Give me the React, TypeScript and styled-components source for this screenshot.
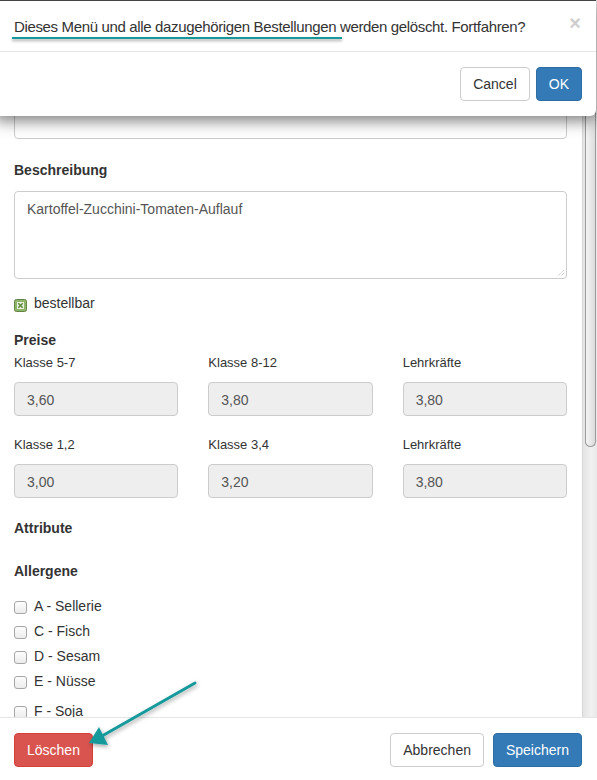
import React from "react";
import styled, { createGlobalStyle } from "styled-components";

const GlobalStyle = createGlobalStyle`
  html, body {
    margin: 0;
    padding: 0;
    background: #fff;
  }
  body {
    font-family: "Liberation Sans", Arial, sans-serif;
    font-size: 14px;
    color: #333;
  }
`;

const Page = styled.div`
  position: relative;
  width: 597px;
  height: 780px;
  overflow: hidden;
  background: #fff;
`;

const EditModal = styled.div`
  display: flex;
  flex-direction: column;
  height: 100%;
`;

const BodyRow = styled.div`
  display: flex;
  height: 717px;
  flex-shrink: 0;
`;

const Content = styled.div`
  flex: 1;
  overflow: hidden;
  padding: 105px 15px 0 14px;
`;

const Scrollbar = styled.div`
  width: 14px;
  border-left: 1px solid #d6d6d6;
  background: linear-gradient(to right, #e4e4e4, #f1f1f1 60%, #e9e9e9);
  display: flex;
  flex-direction: column;
  align-items: center;
`;

const Thumb = styled.div`
  width: 9px;
  height: 446px;
  margin-left: 1px;
  border: 1px solid #9a9a9a;
  border-top: none;
  border-radius: 0 0 6px 6px;
  background: linear-gradient(to right, #f4f4f4, #dcdcdc);
`;

const TextInput = styled.div<{ $height?: number; $disabled?: boolean }>`
  box-sizing: border-box;
  height: ${(p) => p.$height ?? 34}px;
  border: 1px solid #ccc;
  border-radius: 4px;
  background: ${(p) => (p.$disabled ? "#eee" : "#fff")};
  color: #555;
  font-size: 14px;
  line-height: 20px;
  padding: 7px 12px;
  position: relative;
`;

const Grip = styled.svg`
  position: absolute;
  right: 1px;
  bottom: 1px;
`;

const SectionLabel = styled.div<{ $top: number; $bottom?: number }>`
  font-weight: bold;
  font-size: 14px;
  line-height: 20px;
  margin-top: ${(p) => p.$top}px;
  margin-bottom: ${(p) => p.$bottom ?? 0}px;
`;

const CheckRow = styled.div<{ $top?: number }>`
  display: flex;
  align-items: center;
  gap: 7px;
  height: 20px;
  margin-top: ${(p) => p.$top ?? 0}px;
  font-size: 14px;
`;

const Box = styled.span`
  box-sizing: border-box;
  width: 13px;
  height: 13px;
  margin-top: 3px;
  border: 1px solid #a6a6a6;
  border-radius: 3px;
  background: linear-gradient(#fdfdfd, #ececec);
`;

const PriceGrid = styled.div`
  display: grid;
  grid-template-columns: repeat(3, 1fr);
  column-gap: 30px;
  margin-top: 4px;
`;

const PriceCell = styled.div<{ $top: number }>`
  margin-top: ${(p) => p.$top}px;
`;

const SmallLabel = styled.div`
  font-size: 13px;
  line-height: 18px;
  margin-bottom: 10px;
`;

const Footer = styled.div`
  border-top: 1px solid #e5e5e5;
  padding: 15px 15px 15px 14px;
  display: flex;
  align-items: center;
  gap: 9px;
`;

const Button = styled.button<{ $variant?: "default" | "primary" | "danger" }>`
  font-family: "Liberation Sans", Arial, sans-serif;
  font-size: 14px;
  line-height: 20px;
  height: 34px;
  padding: 6px 12px;
  border-radius: 4px;
  border: 1px solid
    ${(p) =>
      p.$variant === "primary" ? "#2e6da4" : p.$variant === "danger" ? "#d43f3a" : "#ccc"};
  background: ${(p) =>
    p.$variant === "primary" ? "#337ab7" : p.$variant === "danger" ? "#d9534f" : "#fff"};
  color: ${(p) => (p.$variant === "primary" || p.$variant === "danger" ? "#fff" : "#333")};
`;

const Spacer = styled.div`
  flex: 1;
`;

const ConfirmDialog = styled.div`
  position: absolute;
  left: -6px;
  top: 0;
  width: 602px;
  height: 116px;
  background: #fff;
  border-radius: 0 0 6px 6px;
  box-shadow: 0 5px 15px rgba(0, 0, 0, 0.5);
  border-top: 1px solid #444;
  box-sizing: border-box;
  display: flex;
  flex-direction: column;
`;

const ConfirmHeader = styled.div`
  height: 50px;
  border-bottom: 1px solid #e5e5e5;
  display: flex;
  align-items: center;
  padding: 0 15px 0 20px;
  font-size: 15px;
  letter-spacing: -0.35px;
  white-space: nowrap;
  color: #333;
`;

const Marked = styled.span`
  position: relative;
  &::after {
    content: "";
    position: absolute;
    left: -2px;
    right: -6px;
    bottom: -4px;
    height: 2px;
    background: #17999b;
    box-shadow: 0 2px 3px rgba(0, 0, 0, 0.35);
  }
`;

const Close = styled.span`
  margin-left: auto;
  font-size: 20px;
  font-weight: bold;
  color: #cfcfcf;
  line-height: 1;
  margin-top: -6px;
  letter-spacing: 0;
`;

const ConfirmFooter = styled.div`
  flex: 1;
  display: flex;
  justify-content: flex-end;
  align-items: center;
  gap: 6px;
  padding: 0 14px;
`;

const Arrow = styled.svg`
  position: absolute;
  left: 0;
  top: 0;
  pointer-events: none;
`;

const GreenCheck = () => (
  <svg width="13" height="13" viewBox="0 0 13 13" style={{ marginTop: 4 }}>
    <rect x="0.5" y="0.5" width="12" height="12" rx="2" fill="#8fb56c" stroke="#62853f" />
    <rect x="3" y="3" width="7" height="7" fill="#e9f2df" />
    <path d="M4.3 4.3 L8.7 8.7 M8.7 4.3 L4.3 8.7" stroke="#5f8a3a" strokeWidth="1.6" />
  </svg>
);

const priceRows = [
  [
    { label: "Klasse 5-7", value: "3,60" },
    { label: "Klasse 8-12", value: "3,80" },
    { label: "Lehrkräfte", value: "3,80" },
  ],
  [
    { label: "Klasse 1,2", value: "3,00" },
    { label: "Klasse 3,4", value: "3,20" },
    { label: "Lehrkräfte", value: "3,80" },
  ],
];

const allergene = ["A - Sellerie", "C - Fisch", "D - Sesam", "E - Nüsse"];

export default function App() {
  return (
    <Page>
      <GlobalStyle />
      <EditModal>
        <BodyRow>
          <Content>
            <TextInput />
            <SectionLabel $top={21} $bottom={11}>
              Beschreibung
            </SectionLabel>
            <TextInput $height={88}>
              Kartoffel-Zucchini-Tomaten-Auflauf
              <Grip width="8" height="8" viewBox="0 0 8 8">
                <path d="M7 1 L1 7 M7 4 L4 7" stroke="#bbb" strokeWidth="1" strokeDasharray="1 1" />
              </Grip>
            </TextInput>
            <CheckRow $top={14}>
              <GreenCheck />
              bestellbar
            </CheckRow>
            <SectionLabel $top={17}>Preise</SectionLabel>
            {priceRows.map((row, r) => (
              <PriceGrid key={r}>
                {row.map((cell, i) => (
                  <PriceCell key={i} $top={r === 0 ? 0 : 16}>
                    <SmallLabel>{cell.label}</SmallLabel>
                    <TextInput $disabled>{cell.value}</TextInput>
                  </PriceCell>
                ))}
              </PriceGrid>
            ))}
            <SectionLabel $top={20}>Attribute</SectionLabel>
            <SectionLabel $top={23} $bottom={15}>
              Allergene
            </SectionLabel>
            {allergene.map((a) => (
              <CheckRow key={a} $top={5}>
                <Box />
                {a}
              </CheckRow>
            ))}
            <CheckRow $top={10}>
              <Box />
              F - Soja
            </CheckRow>
          </Content>
          <Scrollbar>
            <Thumb />
          </Scrollbar>
        </BodyRow>
        <Footer>
          <Button $variant="danger">Löschen</Button>
          <Spacer />
          <Button>Abbrechen</Button>
          <Button $variant="primary">Speichern</Button>
        </Footer>
      </EditModal>

      <ConfirmDialog>
        <ConfirmHeader>
          <span>
            <Marked>Dieses Menü und alle dazugehörigen Bestellungen</Marked> werden gelöscht.
            Fortfahren?
          </span>
          <Close>×</Close>
        </ConfirmHeader>
        <ConfirmFooter>
          <Button>Cancel</Button>
          <Button $variant="primary">OK</Button>
        </ConfirmFooter>
      </ConfirmDialog>

      <Arrow width="597" height="780" viewBox="0 0 597 780">
        <defs>
          <filter id="sh" x="-20%" y="-20%" width="140%" height="140%">
            <feDropShadow dx="1" dy="2" stdDeviation="2" floodColor="#000" floodOpacity="0.35" />
          </filter>
        </defs>
        <g filter="url(#sh)">
          <line x1="195" y1="683" x2="102" y2="736" stroke="#17999b" strokeWidth="3" strokeLinecap="round" />
          <polygon points="89,743 99,727 108,745" fill="#17999b" />
        </g>
      </Arrow>
    </Page>
  );
}
